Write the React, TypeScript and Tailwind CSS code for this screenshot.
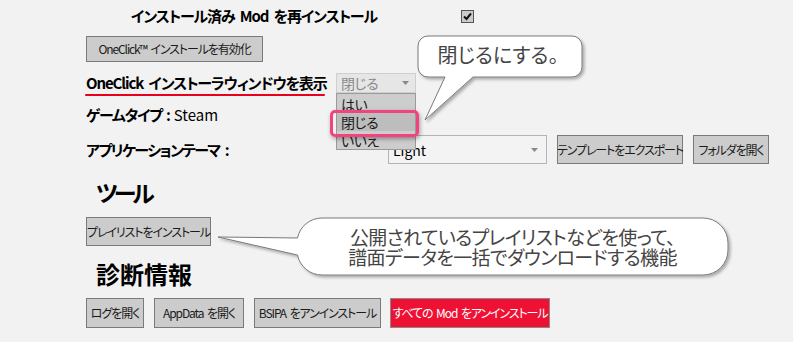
import React from "react";

function Btn({ className, children, red }: { className: string; children: React.ReactNode; red?: boolean }) {
  return (
    <div
      className={
        "flex shrink-0 items-center justify-center border text-[12px] leading-none tracking-[-1.1px] [word-spacing:2px] whitespace-nowrap " +
        (red ? "border-[#8a8a8a] bg-[#ee1133] text-white " : "border-[#7a7a7a] bg-[#cccccc] text-[#1a1a1a] ") +
        className
      }
    >
      {children}
    </div>
  );
}

function Arrow() {
  return (
    <svg width="7" height="4" viewBox="0 0 7 4" className="shrink-0">
      <path d="M0,0 H7 L3.5,4 Z" fill="#8a8a8a" />
    </svg>
  );
}

export default function App() {
  return (
    <div className="relative h-[342px] w-[793px] overflow-hidden bg-[#f2f2f2] font-['Noto_Sans_CJK_JP',sans-serif] text-black [font-feature-settings:'palt']">
      <div className="flex flex-col pl-[86px]">
        {/* Row 1 */}
        <div className="mt-[6px] flex h-[20px] items-center">
          <div className="ml-[45px] w-[330px] whitespace-nowrap text-[15px] font-bold leading-[20px] tracking-[-1.1px] [word-spacing:3px]">インストール済み Mod を再インストール</div>
          <div className="flex h-[13px] w-[13px] items-center justify-center border border-[#555] bg-[#cccccc]">
            <svg width="11" height="11" viewBox="0 0 11 11">
              <path d="M2,5.5 L4.5,8 L9,2.5" fill="none" stroke="#111" strokeWidth="2" />
            </svg>
          </div>
        </div>

        {/* OneClick button */}
        <div className="mt-[10px] flex">
          <Btn className="h-[26px] w-[177px]">OneClick™ インストールを有効化</Btn>
        </div>

        {/* Row 3 */}
        <div className="mt-[11px] flex h-[20px] items-center">
          <div className="relative w-[250px] whitespace-nowrap text-[15px] font-bold leading-[20px] tracking-[-1.1px] [word-spacing:3px]">
            OneClick インストーラウィンドウを表示
            <div className="absolute left-[-1px] top-[21px] h-[2px] w-[240px] rounded-full bg-[#e8001c]" />
          </div>
          <div className="flex h-[20px] w-[80px] items-center justify-between border border-[#cfcfcf] bg-[#e6e6e6] pl-[4px] pr-[6px] text-[14px] leading-none tracking-[-0.5px] text-[#8a8a8a]">
            <span>閉じる</span>
            <Arrow />
          </div>
        </div>

        {/* Row 4 */}
        <div className="mt-[12px] flex h-[20px] items-center whitespace-nowrap text-[15px] leading-[20px] tracking-[-1.2px]">
          <span className="font-bold">ゲームタイプ</span>
          <span className="ml-[4px] font-bold">:</span>
          <span className="ml-[4px] tracking-[0px]">Steam</span>
        </div>

        {/* Row 5 */}
        <div className="mt-[10px] flex h-[29px] items-center">
          <div className="flex w-[302px] whitespace-nowrap text-[15px] font-bold leading-[20px] tracking-[-1.6px]">
            <span>アプリケーションテーマ</span>
            <span className="ml-[5px]">:</span>
          </div>
          <div className="flex h-[29px] w-[159px] shrink-0 items-center justify-between border border-[#b4b4b4] bg-[#f3f3f3] pl-[4px] pr-[8px] text-[14px] leading-none">
            <span>Light</span>
            <Arrow />
          </div>
          <Btn className="ml-[10px] h-[29px] w-[126px]">テンプレートをエクスポート</Btn>
          <Btn className="ml-[10px] h-[29px] w-[76px]">フォルダを開く</Btn>
        </div>

        {/* Tools heading */}
        <div className="ml-[10px] mt-[13px] h-[30px] text-[23px] font-bold leading-[30px] tracking-[-4px]">ツール</div>

        <div className="mt-[10px] flex">
          <Btn className="h-[29px] w-[125px]">プレイリストをインストール</Btn>
        </div>

        <div className="ml-[10px] mt-[13px] h-[30px] text-[24px] font-bold leading-[30px]">診断情報</div>

        <div className="mt-[9px] flex h-[30px] items-center gap-[10px]">
          <Btn className="h-[30px] w-[58px]">ログを開く</Btn>
          <Btn className="h-[30px] w-[90px]">AppData を開く</Btn>
          <Btn className="h-[30px] w-[127px]">BSIPA をアンインストール</Btn>
          <Btn red className="ml-[-1px] h-[30px] w-[160px]">すべての Mod をアンインストール</Btn>
        </div>
      </div>

      {/* Dropdown list overlay */}
      <div className="absolute left-[336px] top-[93px] flex h-[57px] w-[80px] flex-col border border-[#9a9a9a] bg-[#cdcdcd] pt-[1px] text-[14px] leading-[18px] tracking-[-0.5px] text-[#1a1a1a]">
        <div className="h-[18px] pl-[4px]">はい</div>
        <div className="h-[18px] bg-[#bdbdbd] pl-[4px]">閉じる</div>
        <div className="h-[18px] pl-[4px]">いいえ</div>
      </div>
      {/* Pink highlight */}
      <div className="absolute left-[330px] top-[110px] h-[27px] w-[89px] rounded-[5px] border-[3px] border-[#f2437e] shadow-[1px_2px_4px_rgba(0,0,0,0.35)]" />

      {/* Callout 1 */}
      <div className="absolute left-[410px] top-[30px] h-[95px] w-[185px]">
        <svg width="185" height="95" viewBox="0 0 185 95" className="absolute left-0 top-0">
          <defs>
            <filter id="sh1" x="-10%" y="-10%" width="130%" height="130%">
              <feDropShadow dx="2" dy="2" stdDeviation="1.5" floodColor="#000" floodOpacity="0.3" />
            </filter>
          </defs>
          <path
            d="M18,6 H162 A10,10 0 0 1 172,16 V37 A10,10 0 0 1 162,47 H63 L15,90 L35,47 H18 A10,10 0 0 1 8,37 V16 A10,10 0 0 1 18,6 Z"
            fill="#ffffff"
            stroke="#7a7a7a"
            strokeWidth="1"
            filter="url(#sh1)"
          />
        </svg>
        <div className="absolute left-[8px] top-[6px] flex h-[38px] w-[160px] items-center justify-center text-[20px] leading-none text-[#444]">
          閉じるにする。
        </div>
      </div>

      {/* Callout 2 */}
      <div className="absolute left-[210px] top-[210px] h-[75px] w-[530px]">
        <svg width="530" height="75" viewBox="0 0 530 75" className="absolute left-0 top-0">
          <defs>
            <filter id="sh2" x="-5%" y="-10%" width="110%" height="130%">
              <feDropShadow dx="2" dy="2" stdDeviation="1.5" floodColor="#000" floodOpacity="0.3" />
            </filter>
          </defs>
          <path
            d="M112,8 H493 A25,25 0 0 1 518,33 V40 A25,25 0 0 1 493,65 H112 A25,25 0 0 1 87.5,45 L8,27 L87.5,28 A25,25 0 0 1 112,8 Z"
            fill="#ffffff"
            stroke="#7a7a7a"
            strokeWidth="1"
            filter="url(#sh2)"
          />
        </svg>
        <div className="absolute left-[87px] top-[8px] flex h-[57px] w-[431px] flex-col items-center justify-center text-[19px] leading-[20px] tracking-[-0.6px] text-[#444]">
          <div>公開されているプレイリストなどを使って、</div>
          <div>譜面データを一括でダウンロードする機能</div>
        </div>
      </div>
    </div>
  );
}
